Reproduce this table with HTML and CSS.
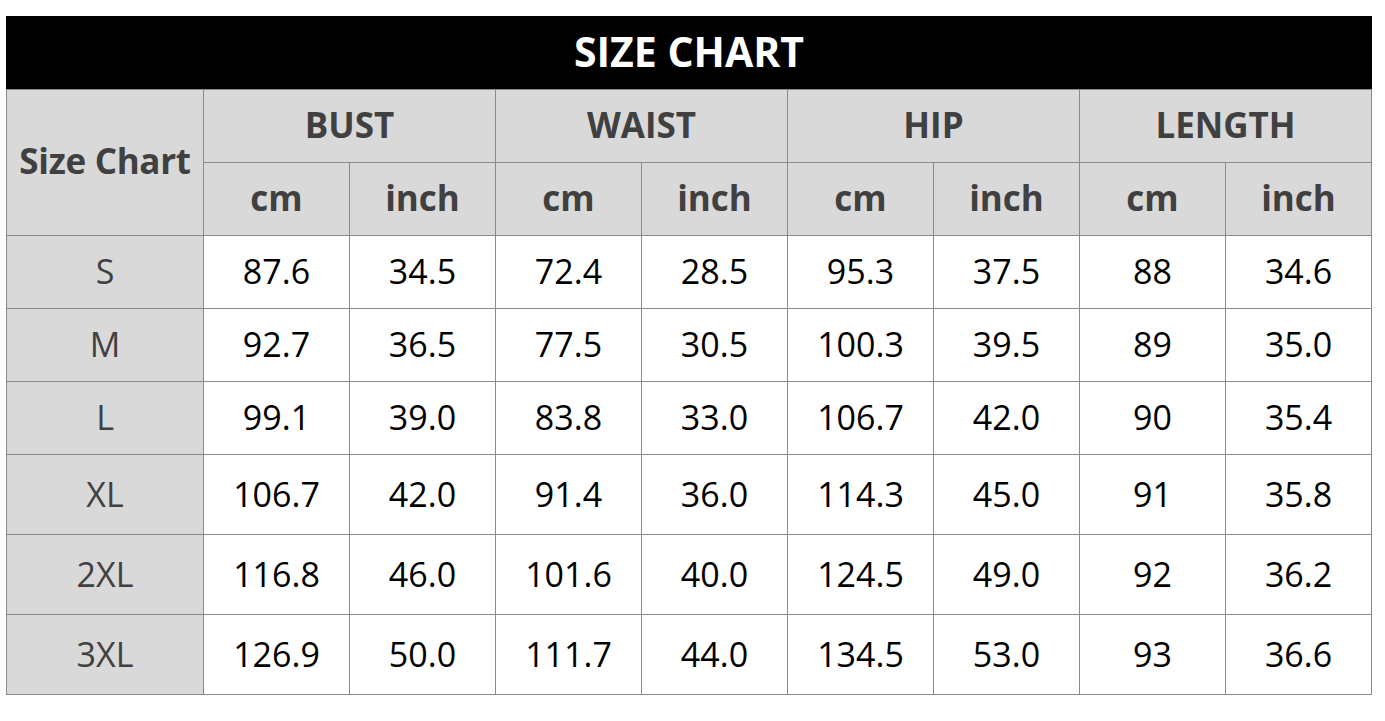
FILE: index.html
```html
<!DOCTYPE html>
<html>
<head>
<meta charset="utf-8">
<link rel="stylesheet" href="styles.css">
</head>
<body>
<table class="chart">
  <colgroup>
    <col class="c-first">
    <col class="c"><col class="c"><col class="c"><col class="c">
    <col class="c"><col class="c"><col class="c"><col class="c">
  </colgroup>
  <thead>
    <tr class="r-title"><th colspan="9" class="title">SIZE CHART</th></tr>
    <tr class="r-head">
      <th rowspan="2" class="hd corner">Size Chart</th>
      <th colspan="2" class="hd">BUST</th>
      <th colspan="2" class="hd">WAIST</th>
      <th colspan="2" class="hd">HIP</th>
      <th colspan="2" class="hd">LENGTH</th>
    </tr>
    <tr class="r-head">
      <th class="hd">cm</th><th class="hd">inch</th>
      <th class="hd">cm</th><th class="hd">inch</th>
      <th class="hd">cm</th><th class="hd">inch</th>
      <th class="hd">cm</th><th class="hd">inch</th>
    </tr>
  </thead>
  <tbody>
    <tr class="r-a"><th class="sz">S</th><td>87.6</td><td>34.5</td><td>72.4</td><td>28.5</td><td>95.3</td><td>37.5</td><td>88</td><td>34.6</td></tr>
    <tr class="r-a"><th class="sz">M</th><td>92.7</td><td>36.5</td><td>77.5</td><td>30.5</td><td>100.3</td><td>39.5</td><td>89</td><td>35.0</td></tr>
    <tr class="r-a"><th class="sz">L</th><td>99.1</td><td>39.0</td><td>83.8</td><td>33.0</td><td>106.7</td><td>42.0</td><td>90</td><td>35.4</td></tr>
    <tr class="r-b"><th class="sz">XL</th><td>106.7</td><td>42.0</td><td>91.4</td><td>36.0</td><td>114.3</td><td>45.0</td><td>91</td><td>35.8</td></tr>
    <tr class="r-b"><th class="sz">2XL</th><td>116.8</td><td>46.0</td><td>101.6</td><td>40.0</td><td>124.5</td><td>49.0</td><td>92</td><td>36.2</td></tr>
    <tr class="r-b"><th class="sz">3XL</th><td>126.9</td><td>50.0</td><td>111.7</td><td>44.0</td><td>134.5</td><td>53.0</td><td>93</td><td>36.6</td></tr>
  </tbody>
</table>
</body>
</html>
```
FILE: styles.css
```css
html, body {
  margin: 0;
  padding: 0;
  background: #ffffff;
}
body {
  padding: 16px 0 0 6px;
  font-family: "Open Sans", "Noto Sans", sans-serif;
}
.chart {
  border-collapse: collapse;
  table-layout: fixed;
  width: 1366px;
}
.c-first { width: 197px; }
.c { width: 146px; }
.chart th, .chart td {
  border: 1px solid #8a8a8a;
  padding: 0 0 3px 0;
  text-align: center;
  vertical-align: middle;
  line-height: 1.2;
}
.r-title { height: 73px; }
.title {
  background: #000000;
  color: #ffffff;
  font-weight: 700;
  font-size: 41px;
  letter-spacing: 0;
  border-top-color: #000 !important;
  border-left-color: #000 !important;
  border-right-color: #000 !important;
}
.r-head { height: 73px; }
.hd {
  background: #d9d9d9;
  color: #404040;
  font-weight: 700;
  font-size: 35px;
}
.corner { font-size: 35px; letter-spacing: -0.3px; }
.r-a { height: 73px; }
.r-b { height: 80px; }
.chart tbody th, .chart tbody td { padding-bottom: 1px; }
.sz {
  background: #d9d9d9;
  color: #404040;
  font-weight: 400;
  font-size: 34px;
}
.chart td {
  color: #000000;
  font-size: 34px;
  font-weight: 400;
}
```
